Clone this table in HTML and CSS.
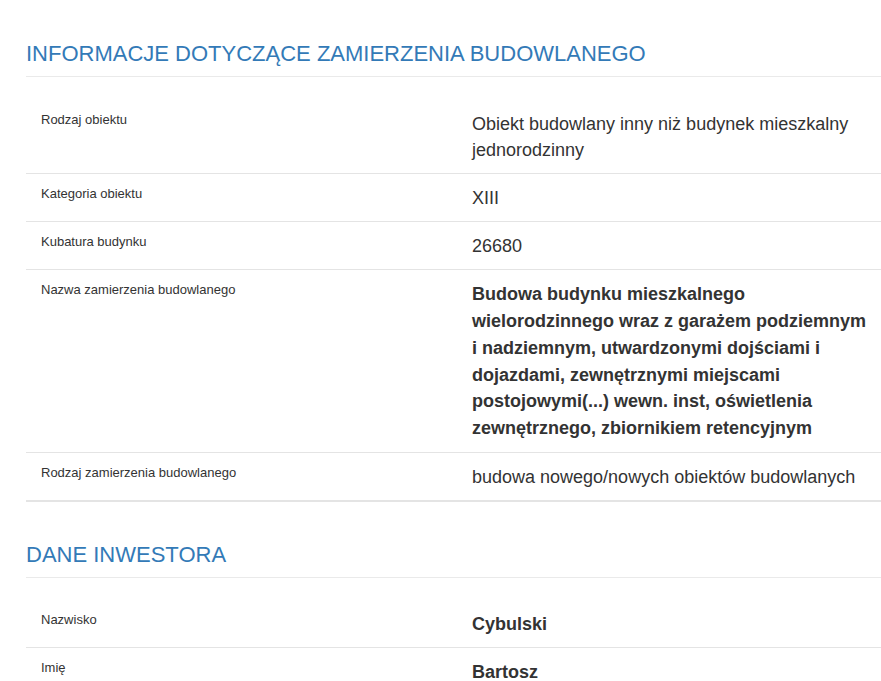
FILE: index.html
```html
<!DOCTYPE html>
<html lang="pl">
<head>
<meta charset="utf-8">
<title>Informacje</title>
<link rel="stylesheet" href="styles.css">
</head>
<body>
<div class="page">
  <section class="section first">
    <h2 class="section-title">INFORMACJE DOTYCZĄCE ZAMIERZENIA BUDOWLANEGO</h2>
    <div class="table">
      <div class="row">
        <div class="label">Rodzaj obiektu</div>
        <div class="value">Obiekt budowlany inny niż budynek mieszkalny jednorodzinny</div>
      </div>
      <div class="row">
        <div class="label">Kategoria obiektu</div>
        <div class="value">XIII</div>
      </div>
      <div class="row">
        <div class="label">Kubatura budynku</div>
        <div class="value">26680</div>
      </div>
      <div class="row">
        <div class="label">Nazwa zamierzenia budowlanego</div>
        <div class="value strong multi">Budowa budynku mieszkalnego wielorodzinnego wraz z garażem podziemnym i nadziemnym, utwardzonymi dojściami i dojazdami, zewnętrznymi miejscami postojowymi(...) wewn. inst, oświetlenia zewnętrznego, zbiornikiem retencyjnym</div>
      </div>
      <div class="row">
        <div class="label">Rodzaj zamierzenia budowlanego</div>
        <div class="value">budowa nowego/nowych obiektów budowlanych</div>
      </div>
    </div>
  </section>
  <section class="section second">
    <h2 class="section-title">DANE INWESTORA</h2>
    <div class="table">
      <div class="row">
        <div class="label">Nazwisko</div>
        <div class="value strong">Cybulski</div>
      </div>
      <div class="row">
        <div class="label">Imię</div>
        <div class="value strong">Bartosz</div>
      </div>
    </div>
  </section>
</div>
</body>
</html>
```
FILE: styles.css
```css
* { box-sizing: border-box; }
html, body {
  margin: 0;
  padding: 0;
  background: #fff;
}
body {
  font-family: "Liberation Sans", Arial, sans-serif;
  color: #333;
}
.page {
  padding-left: 26px;
}
.section {
  margin-top: 42px;
}
.section.second {
  margin-top: 41px;
}
.section-title {
  margin: 0;
  font-size: 22px;
  font-weight: normal;
  line-height: 24px;
  color: #337ab7;
  padding-bottom: 10px;
  border-bottom: 1px solid #eaeaea;
}
.table {
  margin-top: 22px;
  border-bottom: 2px solid #e4e4e4;
}
.section.second .table {
  margin-top: 21px;
}
.row {
  display: grid;
  grid-template-columns: 431px 1fr;
  border-top: 1px solid #e4e4e4;
}
.row:first-child {
  border-top-color: transparent;
}
.label {
  padding: 11px 10px 10px 15px;
  font-size: 13px;
  line-height: 18px;
}
.value {
  padding: 11px 8px 10px 15px;
  font-size: 18px;
  line-height: 26px;
}
.value.strong {
  font-weight: bold;
}
.value.multi {
  line-height: 26.85px;
}
```
